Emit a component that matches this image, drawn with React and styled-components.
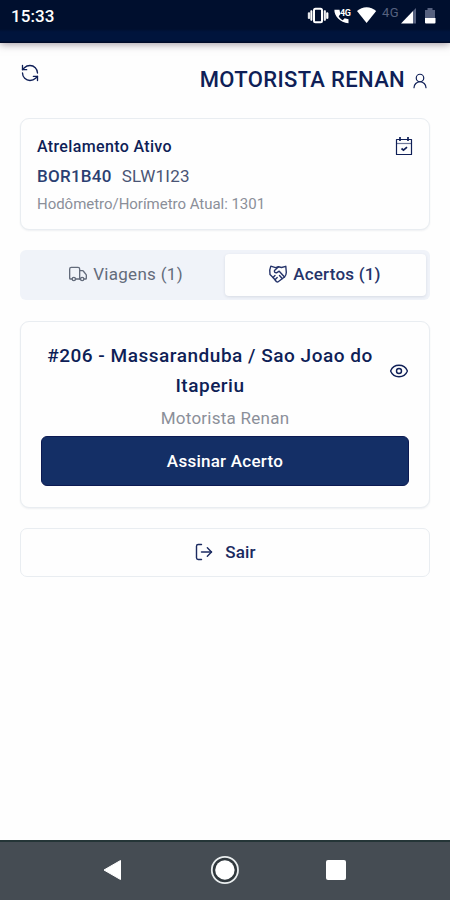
import React, { useState } from 'react';
import styled, { createGlobalStyle } from 'styled-components';
import { RefreshCcw, UserRound, Truck, Eye, LogOut } from 'lucide-react';

const color = {
  navy: '#0f1f57',
  primary: '#142f66',
  gray: '#8b8f99',
  slate: '#636b7b',
  border: '#e9edf1',
  muted: '#f0f3f9',
};

const GlobalStyle = createGlobalStyle`
  * {
    box-sizing: border-box;
  }
  body {
    margin: 0;
    background: #fefefe;
    font-family: Roboto, sans-serif;
    color: ${color.navy};
  }
  button {
    font-family: inherit;
    cursor: pointer;
  }
`;

const Screen = styled.div`
  display: flex;
  flex-direction: column;
  width: 450px;
  height: 900px;
  overflow: hidden;
`;

const StatusBar = styled.header`
  display: flex;
  flex: none;
  justify-content: space-between;
  height: 43px;
  padding: 5px 12px 0 11px;
  background: linear-gradient(#000f2e 0 29px, #00143c 32px 41px, #000a28 42px);
  box-shadow: 0 1px 8px rgba(60, 40, 60, 0.5);
  color: #fff;
`;

const Clock = styled.span`
  font-size: 17px;
  font-weight: 500;
  line-height: 22px;
  letter-spacing: 0.1px;
`;

const Main = styled.main`
  display: flex;
  flex: 1;
  flex-direction: column;
  padding: 19px 20px 0;
`;

const TopRow = styled.div`
  display: flex;
  justify-content: space-between;
  height: 56px;
  padding: 0 1px 0 0;
`;

const IconButton = styled.button`
  display: flex;
  align-self: flex-start;
  padding: 1px 0 0;
  border: none;
  background: none;
  color: ${color.navy};
`;

const Title = styled.h1`
  display: flex;
  align-items: center;
  height: 34px;
  gap: 6px;
  margin: 0;
  font-size: 22px;
  font-weight: 500;
  letter-spacing: 0.33px;

  svg {
    margin-top: 3px;
  }
`;

const Card = styled.section`
  border: 1px solid ${color.border};
  border-radius: 9px;
  background: #fefefe;
  box-shadow: 0 1px 2px rgba(30, 50, 80, 0.07);
`;

const Hitch = styled(Card)`
  display: flex;
  justify-content: space-between;
  height: 112px;
  padding: 17px 16px 0 16px;
`;

const HitchTitle = styled.h2`
  margin: 0;
  font-size: 16px;
  font-weight: 500;
  line-height: 21px;
  letter-spacing: 0.35px;
`;

const Plates = styled.div`
  display: flex;
  gap: 10px;
  margin-top: 9px;
  font-size: 17px;
  line-height: 20px;
  letter-spacing: 0.25px;
`;

const Plate = styled.span`
  font-weight: ${(props) => (props.$main ? 500 : 400)};
  color: ${(props) => (props.$main ? '#2b3f72' : '#4a5575')};
`;

const Meter = styled.p`
  margin: 8px 0 0;
  font-size: 15px;
  line-height: 20px;
  letter-spacing: -0.03px;
  color: ${color.gray};
`;

const Tabs = styled.div`
  display: grid;
  grid-template-columns: 1fr 1fr;
  height: 50px;
  margin-top: 20px;
  padding: 4px;
  border-radius: 6px;
  background: ${color.muted};
`;

const Tab = styled.button`
  display: flex;
  align-items: center;
  justify-content: center;
  gap: 5px;
  padding: ${(props) => (props.$active ? '0 2px 2px 0' : '0 0 2px 2px')};
  border: none;
  border-radius: 4px;
  background: ${(props) => (props.$active ? '#fefefe' : 'transparent')};
  box-shadow: ${(props) =>
    props.$active ? '0 1px 3px rgba(30, 50, 80, 0.12)' : 'none'};
  color: ${(props) => (props.$active ? '#25346a' : color.slate)};
  font-size: 17px;
  font-weight: ${(props) => (props.$active ? 500 : 400)};
  letter-spacing: ${(props) => (props.$active ? '0.2px' : '0.3px')};
`;

const Settlement = styled(Card)`
  height: 187px;
  margin-top: 21px;
  padding: 19px 20px 0 20px;
`;

const SettlementHead = styled.div`
  display: flex;
  align-items: center;
  justify-content: space-between;
`;

const Route = styled.h3`
  width: 338px;
  margin: 0;
  font-size: 19px;
  font-weight: 500;
  line-height: 30px;
  letter-spacing: 0.52px;
  text-align: center;
`;

const Driver = styled.p`
  margin: 7px 0 7px;
  font-size: 17px;
  line-height: 21px;
  letter-spacing: 0.25px;
  text-align: center;
  color: ${color.gray};
`;

const SignButton = styled.button`
  width: 100%;
  height: 50px;
  border: 1px solid #0c1a52;
  border-radius: 6px;
  background: ${color.primary};
  color: #fff;
  font-size: 17px;
  font-weight: 500;
  letter-spacing: 0.25px;
`;

const LogoutButton = styled.button`
  display: flex;
  align-items: center;
  justify-content: center;
  gap: 11px;
  height: 49px;
  margin-top: 20px;
  padding-bottom: 3px;
  border: 1px solid ${color.border};
  border-radius: 7px;
  background: #fefefe;
  color: #1b2a60;
  font-size: 17px;
  font-weight: 500;
  letter-spacing: 0.2px;
`;

const NavBar = styled.nav`
  display: flex;
  flex: none;
  align-items: center;
  justify-content: space-between;
  height: 60px;
  padding: 0 104px 2px 102px;
  border-top: 2px solid #243537;
  background: #454c53;
`;

const StatusIcons = () => (
  <svg width="132" height="22" viewBox="306 5 132 22" fill="#fff">
    <rect x="314" y="8.8" width="8" height="13.4" rx="1.5" fill="none" stroke="#fff" strokeWidth="2" />
    <path d="M310.8 10.7h1.2v9.6h-1.2zM308.3 12.8h1.4v5.6h-1.4zM324.2 10.7h1.2v9.6h-1.2zM326.6 12.8h1.4v5.6h-1.4z" stroke="#fff" strokeWidth=".8" />
    <path d="M336.5 9.8h-2.1c-.4 5.9 5.7 13.1 14.1 13.4v-4l-3.8-1-2 2c-1.7-.9-3.2-2.4-4-4l1.6-1.9-.8-4.5z" />
    <text x="340" y="16" fontSize="9" fontWeight="700" fontFamily="Roboto" textLength="11">4G</text>
    <path d="M357 11c5.4-5.1 13.8-5.1 19.2 0l-9.6 12z" />
    <text x="382" y="17" fontSize="13" fontFamily="Roboto" fill="#56617f" textLength="16.5">4G</text>
    <path d="M416 8v15.5h-3V11z" fill="#56617f" />
    <path d="M401 23.5l12-12.5v12.5z" />
    <path d="M427.5 8h5v2h2.5v8h-10v-8h2.5z" fill="#56617f" />
    <path d="M425 18h10.5v4.5a1 1 0 0 1-1 1h-8.5a1 1 0 0 1-1-1z" />
  </svg>
);

const CalendarIcon = () => (
  <svg width="18" height="20" viewBox="0 0 18 20" fill="none" stroke="currentColor">
    <path d="M1.5 3.5h15v15h-15z" strokeWidth="1.2" strokeLinejoin="round" />
    <path d="M1.5 7.5h15" strokeWidth="1.2" opacity=".6" />
    <path d="M5 1v4M13 1v4" strokeWidth="1.7" />
    <path d="M6.5 12.5l2 1.7 3.5-3" strokeWidth="1.7" />
  </svg>
);

const HandshakeIcon = () => (
  <svg
    width="20"
    height="20"
    viewBox="0 0 20 20"
    fill="none"
    stroke="currentColor"
    strokeWidth="1.4"
    strokeLinecap="round"
    strokeLinejoin="round"
  >
    <path d="M2.8 2.2Q1 6 2 10.5L5.5 14l3 3.7q1 .7 2-.2l6-4.5q1.7-1.5 1.8-4.5L17.8 2.3l-4.3 1.2-3-.7-3 .8z" />
    <path d="M10.5 2.8 6.5 6.5q-.5 2.5 2 2.3l2.7-1.6L16.5 13" />
    <path d="M5 13.5l2-2M7.2 15.5l2-2M11.5 11.5l2.7 3" />
  </svg>
);

const BackIcon = () => (
  <svg width="20" height="22" viewBox="0 0 20 22">
    <path d="M2 11 18.5 1.5v19z" fill="#fff" stroke="#fff" strokeLinejoin="round" />
  </svg>
);

const HomeIcon = () => (
  <svg width="30" height="30" viewBox="0 0 30 30">
    <circle cx="15.9" cy="15" r="13.1" fill="#30383d" stroke="#e9edee" strokeWidth="1.8" />
    <circle cx="15.9" cy="15" r="9.7" fill="#fff" />
  </svg>
);

const RecentIcon = () => (
  <svg width="20" height="20" viewBox="0 0 20 20">
    <rect width="20" height="20" rx="2" fill="#fff" />
  </svg>
);

const App = () => {
  const [tab, setTab] = useState('acertos');

  return (
    <>
      <GlobalStyle />
      <Screen>
        <StatusBar>
          <Clock>15:33</Clock>
          <StatusIcons />
        </StatusBar>
        <Main>
          <TopRow>
            <IconButton>
              <RefreshCcw size={20} strokeWidth={1.6} />
            </IconButton>
            <Title>
              MOTORISTA RENAN
              <UserRound size={18} strokeWidth={1.6} />
            </Title>
          </TopRow>
          <Hitch>
            <div>
              <HitchTitle>Atrelamento Ativo</HitchTitle>
              <Plates>
                <Plate $main>BOR1B40</Plate>
                <Plate>SLW1I23</Plate>
              </Plates>
              <Meter>Hodômetro/Horímetro Atual: 1301</Meter>
            </div>
            <CalendarIcon />
          </Hitch>
          <Tabs>
            <Tab $active={tab === 'viagens'} onClick={() => setTab('viagens')}>
              <Truck size={20} strokeWidth={1.6} />
              Viagens (1)
            </Tab>
            <Tab $active={tab === 'acertos'} onClick={() => setTab('acertos')}>
              <HandshakeIcon />
              Acertos (1)
            </Tab>
          </Tabs>
          <Settlement>
            <SettlementHead>
              <Route>#206 - Massaranduba / Sao Joao do Itaperiu</Route>
              <Eye size={20} strokeWidth={1.7} />
            </SettlementHead>
            <Driver>Motorista Renan</Driver>
            <SignButton>Assinar Acerto</SignButton>
          </Settlement>
          <LogoutButton>
            <LogOut size={20} strokeWidth={1.7} />
            Sair
          </LogoutButton>
        </Main>
        <NavBar>
          <BackIcon />
          <HomeIcon />
          <RecentIcon />
        </NavBar>
      </Screen>
    </>
  );
};

export default App;
